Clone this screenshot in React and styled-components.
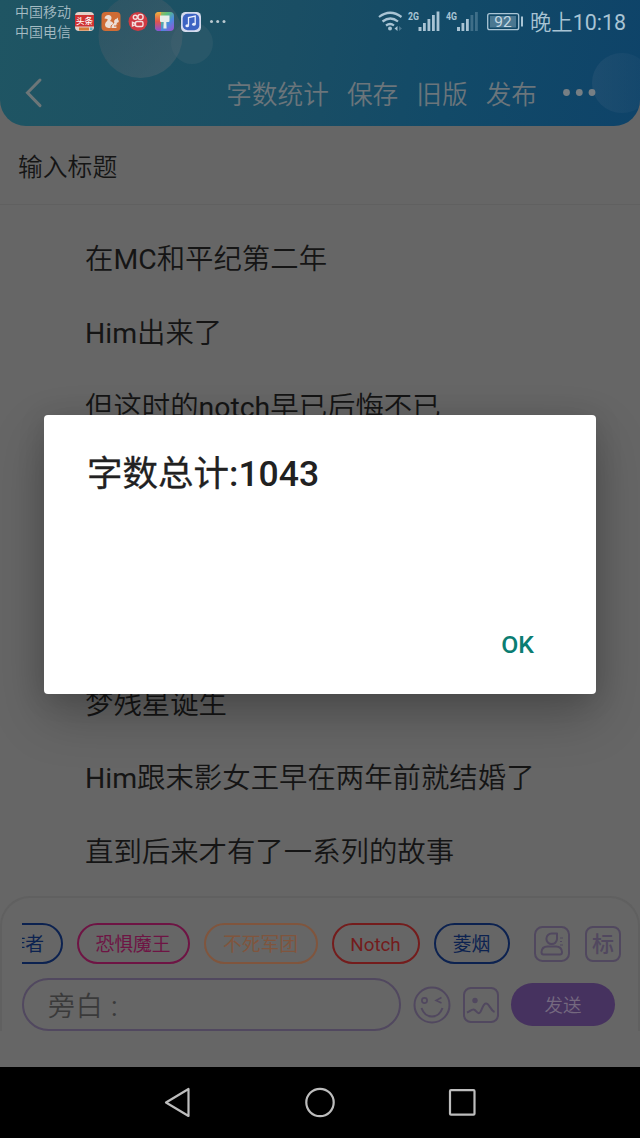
import React from "react";
import styled, { createGlobalStyle } from "styled-components";

const chips = [
  { name: "作者", color: "#0c2250", width: 80.5, shift: true },
  { name: "恐惧魔王", color: "#6e1444", width: 113 },
  { name: "不死军团", color: "#80553d", width: 114 },
  { name: "Notch", color: "#741c1c", width: 88 },
  { name: "菱烟", color: "#0c2250", width: 76 },
];

// each line is [chinese, latin, chinese]
const lines = [
  ["在", "MC", "和平纪第二年"],
  ["", "Him", "出来了"],
  ["但这时的", "notch", "早已后悔不已"],
  [],
  [],
  [],
  ["梦残星诞生"],
  ["", "Him", "跟末影女王早在两年前就结婚了"],
  ["直到后来才有了一系列的故事"],
];

function AppIcons() {
  return (
    <svg width="152" height="24" viewBox="75 10 152 24">
      <defs>
        <linearGradient id="rainbow" x1="0" x2="1" y1="0" y2="1">
          <stop offset="0" stopColor="#e9a83c" />
          <stop offset="0.35" stopColor="#5cc07a" />
          <stop offset="0.65" stopColor="#4a8be0" />
          <stop offset="1" stopColor="#a04bd0" />
        </linearGradient>
        <linearGradient id="rainbowLeft" x1="0" x2="0" y1="0" y2="1">
          <stop offset="0" stopColor="#f0b040" />
          <stop offset="0.5" stopColor="#e0564c" />
          <stop offset="1" stopColor="#8a4fd8" />
        </linearGradient>
      </defs>
      <rect x="75" y="12" width="19" height="19" rx="4" fill="#e4cfc8" />
      <path d="M75 15h19v11.500H75z" fill="#cf3232" />
      <path d="M79 27.500h10v3H79z" fill="#d77b35" />
      <path d="M90 27.500h2.500v2.500H90z" fill="#5fb4c4" />
      <text x="84.500" y="24.300" textAnchor="middle" fontSize="8.500" fontWeight="500" fill="#fff">头条</text>
      <rect x="101.500" y="12" width="19" height="19" rx="4" fill="#cf6c35" />
      <path
        d="M104.500 18.500q.5-3.500 4-3.500 3 .3 3 3 0 1.500-1.500 3 3 .5 3.500 3 1.500-1.500.5-3 1-2.500 3-2.500l1-1v2q1.500 1.500.5 2.800l-2 .7 1 1.500h-1.500l.5 3.500h-8q-3.500-.5-3.500-3.500 0-2 2-3.500 1-1 .5-2z"
        fill="#ecdfd6"
      />
      <path d="M111 28q-.5-2.500 1.500-3.500M115 27v-2" stroke="#cf6c35" strokeWidth="1" fill="none" />
      <circle cx="138" cy="21.500" r="9.500" fill="#cf3a43" />
      <g fill="none" stroke="#f3dede" strokeWidth="1.400">
        <circle cx="135.300" cy="17.300" r="2" />
        <circle cx="140.500" cy="17" r="2.600" />
        <rect x="135.500" y="21.500" width="7.500" height="5" rx="1.500" />
        <path d="M135.500 23.500l-3-1.200v3.600l3-1.200" />
      </g>
      <rect x="155" y="12" width="19" height="19" rx="4" fill="url(#rainbow)" />
      <path d="M159 12h2v19h-2a4 4 0 0 1-4-4V16a4 4 0 0 1 4-4z" fill="url(#rainbowLeft)" />
      <path d="M160 15.500h9.500v5.500q0 1-1 1h-2.200l.3 6.500h-3.200l.3-6.500H161q-1 0-1-1z" fill="#e7ecea" />
      <rect x="181" y="12" width="20" height="20" rx="4.500" fill="#d5dbee" />
      <rect x="182.700" y="13.700" width="16.600" height="16.600" rx="5" fill="#3d64c3" />
      <path d="M188.500 25.500v-8l6.700-1.500v8" fill="none" stroke="#e9effc" strokeWidth="1.300" />
      <ellipse cx="187.200" cy="25.700" rx="1.800" ry="1.500" fill="#e9effc" />
      <ellipse cx="193.900" cy="24.200" rx="1.800" ry="1.500" fill="#e9effc" />
      <g fill="#bac9d0">
        <circle cx="211.500" cy="21.500" r="1.500" />
        <circle cx="217.700" cy="21.500" r="1.500" />
        <circle cx="224" cy="21.500" r="1.500" />
      </g>
    </svg>
  );
}

function SignalIcons() {
  return (
    <svg width="146" height="28" viewBox="379 8 146 28" fill="#a9c4d4">
      <g fill="none" stroke="#a9c4d4" strokeWidth="2.200">
        <path d="M380 17q11-8.500 22.500 0" />
        <path d="M383.500 21.500q8-6 15.500 0" />
        <path d="M387 25.500q4.200-3 8 0" />
      </g>
      <circle cx="391" cy="28.500" r="2" />
      <path d="M398.500 26v5l-3-2.500z" />
      <path d="M400 26v5l3-2.500z" opacity=".35" />
      <text x="409" y="20" fontSize="11.500" fontWeight="700" textLength="11" lengthAdjust="spacingAndGlyphs">2G</text>
      <path d="M419.500 27h3v4h-3zM424 23h2.800v8H424zM428.500 19h2.800v12h-2.800zM433 15h2.800v16H433zM437.600 11.500h2.800V31h-2.800z" />
      <text x="447" y="20" fontSize="11.500" fontWeight="700" textLength="11" lengthAdjust="spacingAndGlyphs">4G</text>
      <path d="M458 27h3v4h-3zM462.500 23h2.800v8h-2.800zM467 19h2.800v12H467z" />
      <path d="M471.500 15h2.800v16h-2.800zM476 12h2.800v19H476z" opacity=".3" />
      <rect x="488.700" y="13.700" width="31" height="16" rx="2" fill="none" stroke="#a9c4d4" strokeWidth="1.300" />
      <path d="M491 16h26v11.500h-26z" opacity=".38" />
      <path d="M522 16.500h2v10h-2z" />
      <text x="504" y="27" textAnchor="middle" fontSize="15.500" fill="#c3d7e2">92</text>
    </svg>
  );
}

function App() {
  return (
    <Screen>
      <GlobalStyle />
      <Header>
        <Bubbles viewBox="0 0 640 126">
          <defs>
            <linearGradient id="bubble" x1="0" x2="1" y1="0" y2="1">
              <stop offset="0" stopColor="#4d5b66" stopOpacity=".3" />
              <stop offset="1" stopColor="#4d6672" stopOpacity=".55" />
            </linearGradient>
            <linearGradient id="bubbleBlue">
              <stop offset="0" stopColor="#2a5575" stopOpacity=".5" />
              <stop offset="1" stopColor="#204f73" stopOpacity=".3" />
            </linearGradient>
          </defs>
          <circle cx="192" cy="43" r="21" fill="#3c6170" fillOpacity=".4" />
          <circle cx="140.500" cy="36" r="42" fill="url(#bubble)" />
          <circle cx="622" cy="83" r="30" fill="url(#bubbleBlue)" />
        </Bubbles>
        <StatusBar>
          <Carriers>
            <span>中国移动</span>
            <span>中国电信</span>
          </Carriers>
          <AppIcons />
          <Spacer />
          <SignalIcons />
          <Clock>
            晚上<Latin>10:18</Latin>
          </Clock>
        </StatusBar>
        <Toolbar>
          <svg width="20" height="32" viewBox="0 0 20 32" fill="none" stroke="#6c7678" strokeWidth="3" strokeLinecap="round">
            <path d="M16 3L3.500 15.800 16 28.600" />
          </svg>
          <Actions>
            <span>字数统计</span>
            <span>保存</span>
            <span>旧版</span>
            <span>发布</span>
          </Actions>
          <svg width="34" height="10" viewBox="0 0 34 10" fill="#777f84">
            <circle cx="3.500" cy="4.500" r="3.400" />
            <circle cx="16.300" cy="4.500" r="3.400" />
            <circle cx="29" cy="4.500" r="3.400" />
          </svg>
        </Toolbar>
      </Header>
      <TitleField>输入标题</TitleField>
      <Story>
        {lines.map(([before, latin, after], i) => (
          <Line key={i}>
            {before}
            {latin && <Latin>{latin}</Latin>}
            {after}
          </Line>
        ))}
      </Story>
      <Composer>
        <ChipRow>
          <ChipList>
            {chips.map((c) => (
              <Chip key={c.name} $color={c.color} $width={c.width} $shift={c.shift}>
                {c.name}
              </Chip>
            ))}
          </ChipList>
          <svg width="36" height="36" viewBox="0 0 36 36" fill="none" stroke="#51485f" strokeWidth="2">
            <rect x="1" y="1" width="34" height="34" rx="7.500" />
            <path d="M23 7.500v5.500a5.300 5.300 0 1 1-5.300-5.500z" strokeLinejoin="round" />
            <path d="M7.500 26q.5-5.500 6-5.500h8.500q5.500 0 6 5.500 0 2.500-2 2.500H9.500q-2 0-2-2.500z" />
            <path d="M26 12h3M26 15.500h2M26 19h3" strokeWidth="1.200" />
          </svg>
          <TagButton>标</TagButton>
        </ChipRow>
        <InputRow>
          <Input>
            旁白<Latin> :</Latin>
          </Input>
          <svg width="38" height="38" viewBox="0 0 38 38" fill="none" stroke="#51485f" strokeWidth="2">
            <circle cx="19" cy="19" r="17.500" />
            <circle cx="11.500" cy="14.500" r="2.600" strokeWidth="1.700" />
            <path d="M28.500 11.500L23 14.500l5.500 2.500" strokeWidth="1.500" />
            <path d="M8.500 22q3 8.500 10.500 8.500T29.500 22" />
          </svg>
          <svg width="36" height="36" viewBox="0 0 36 36" fill="none" stroke="#51485f" strokeWidth="2">
            <rect x="1" y="1" width="34" height="34" rx="7" />
            <circle cx="12" cy="13.500" r="2.700" fill="#51485f" stroke="none" />
            <path d="M4 25.500c3-1 4-3 6.500-3s3.500 5 6 3.500 3-9.500 6.500-9.500 4.500 7 8.500 8.500" />
          </svg>
          <Send>发送</Send>
        </InputRow>
      </Composer>
      <NavBar>
        <svg width="28" height="32" viewBox="0 0 28 32">
          <path d="M2 15.500L24.500 2v27z" />
        </svg>
        <svg width="32" height="32" viewBox="0 0 32 32">
          <circle cx="16" cy="15.500" r="13.700" />
        </svg>
        <svg width="28" height="32" viewBox="0 0 28 32">
          <rect x="2" y="3.200" width="24.500" height="24.500" rx="1" />
        </svg>
      </NavBar>
      <Dialog>
        <DialogTitle>
          字数总计<b>:1043</b>
        </DialogTitle>
        <OkButton>OK</OkButton>
      </Dialog>
    </Screen>
  );
}

export default App;

const GlobalStyle = createGlobalStyle`
  body {
    margin: 0;
    background: #666;
    font-family: Roboto, "Noto Sans CJK SC", sans-serif;
  }
  * {
    box-sizing: border-box;
  }
  svg {
    flex-shrink: 0;
  }
`;
const Screen = styled.div`
  position: relative;
  display: flex;
  flex-direction: column;
  width: 640px;
  height: 1138px;
  overflow: hidden;
  background: #666;
`;
const Latin = styled.span`
  font-weight: 400;
`;
const Header = styled.div`
  position: relative;
  height: 126px;
  flex-shrink: 0;
  overflow: hidden;
  border-radius: 0 0 26px 26px;
  background: linear-gradient(100deg, #1f5563 0%, #1a4e64 45%, #124a68 70%, #0e4369 100%);
`;
const Bubbles = styled.svg`
  position: absolute;
  inset: 0;
`;
const StatusBar = styled.div`
  position: relative;
  display: flex;
  align-items: center;
  height: 44px;
  padding: 0 14px 0 15px;
`;
const Carriers = styled.div`
  display: flex;
  flex-direction: column;
  width: 60px;
  padding-top: 1px;
  font-size: 14px;
  font-weight: 350;
  line-height: 19.5px;
  color: #a5bcc3;
  white-space: nowrap;
`;
const Spacer = styled.div`
  flex: 1;
`;
const Clock = styled.div`
  margin-left: 6px;
  padding-top: 2px;
  font-size: 21.4px;
  font-weight: 350;
  line-height: 46px;
  color: #a9c4d4;
  white-space: nowrap;
`;
const Toolbar = styled.div`
  position: relative;
  display: flex;
  align-items: center;
  height: 82px;
  padding: 16px 43px 0 24px;
`;
const Actions = styled.div`
  display: flex;
  flex: 1;
  justify-content: flex-end;
  gap: 18px;
  margin-right: 26px;
  padding-top: 3px;
  font-size: 25.7px;
  font-weight: 350;
  line-height: 36px;
  color: #6b757b;
  white-space: nowrap;
`;
const TitleField = styled.div`
  flex-shrink: 0;
  height: 79px;
  padding-left: 18px;
  border-bottom: 1px solid #606060;
  font-size: 24.8px;
  font-weight: 350;
  line-height: 83px;
  color: #151515;
`;
const Story = styled.div`
  flex-shrink: 0;
  height: 691px;
  padding: 18px 0 0 85px;
`;
const Line = styled.div`
  height: 74.1px;
  font-size: 28.4px;
  font-weight: 350;
  line-height: 74px;
  color: #151515;
  white-space: nowrap;
`;
const Composer = styled.div`
  flex-shrink: 0;
  height: 135px;
  padding: 25px 16px 0 20px;
  border: 2px solid #606060;
  border-bottom: 0;
  border-radius: 30px 30px 0 0;
`;
const ChipRow = styled.div`
  display: flex;
  align-items: center;
  height: 41px;
`;
const ChipList = styled.div`
  display: flex;
  flex-shrink: 0;
  gap: 14px;
  width: 491px;
  margin-right: 21px;
  overflow: hidden;
`;
const Chip = styled.div`
  flex-shrink: 0;
  width: ${(p) => p.$width}px;
  height: 41px;
  margin-left: ${(p) => (p.$shift ? "-40px" : "0")};
  padding-left: ${(p) => (p.$shift ? "6px" : "0")};
  border: 2px solid ${(p) => p.$color};
  border-radius: 21px;
  color: ${(p) => p.$color};
  font-size: 18.8px;
  line-height: 40px;
  text-align: center;
`;
const TagButton = styled.div`
  flex-shrink: 0;
  width: 36px;
  height: 36px;
  margin-left: 15px;
  border: 2px solid #51485f;
  border-radius: 8px;
  color: #51485f;
  font-size: 22px;
  font-weight: 500;
  line-height: 34px;
  text-align: center;
`;
const InputRow = styled.div`
  display: flex;
  align-items: center;
  gap: 12px;
  margin-top: 14px;
`;
const Input = styled.div`
  width: 379px;
  height: 53px;
  padding-left: 24px;
  border: 2px solid #51485f;
  border-radius: 27px;
  color: #3a3a3a;
  font-size: 27px;
  font-weight: 350;
  line-height: 54px;
  letter-spacing: 0.8px;
`;
const Send = styled.div`
  width: 104px;
  height: 43px;
  border-radius: 22px;
  background: #46325f;
  color: #75697f;
  font-size: 18.5px;
  font-weight: 350;
  line-height: 47px;
  text-align: center;
`;
const NavBar = styled.div`
  display: flex;
  align-items: center;
  justify-content: space-between;
  height: 71px;
  margin-top: auto;
  padding: 0 164px;
  background: #000;
  fill: none;
  stroke: #bdbdbd;
  stroke-width: 2.2;
  stroke-linejoin: round;
`;
const Dialog = styled.div`
  position: absolute;
  top: 415px;
  left: 44px;
  display: flex;
  flex-direction: column;
  justify-content: space-between;
  width: 552px;
  height: 279px;
  padding: 36px 62px 31px 43px;
  border-radius: 4px;
  background: #fff;
  box-shadow: 0 22px 52px rgba(0, 0, 0, 0.24), 0 4px 28px rgba(0, 0, 0, 0.12);
`;
const DialogTitle = styled.div`
  font-size: 35.5px;
  font-weight: 400;
  line-height: 46px;
  color: #212121;
  -webkit-text-stroke: 0.3px #212121;
  b {
    font-weight: 500;
    -webkit-text-stroke: 0;
  }
`;
const OkButton = styled.div`
  align-self: flex-end;
  font-size: 24.8px;
  font-weight: 500;
  line-height: 36px;
  color: #0b7d72;
`;
